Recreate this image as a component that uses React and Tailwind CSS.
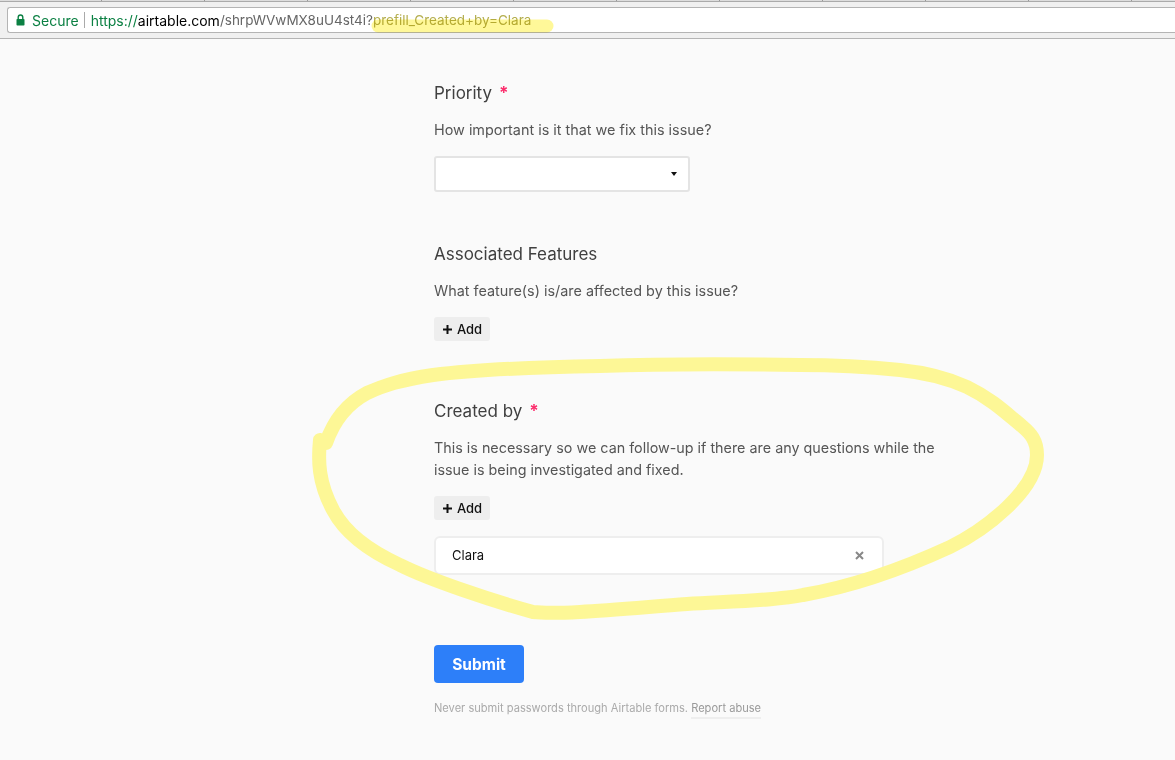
import React from "react";

const FONT = "font-['Inter',sans-serif]";
const TAB_COUNT = 12;

const Label = ({ children, required }) => (
  <h2 className="h-[24px] text-[17px] leading-[24px] text-[#404040] flex">
    {children}
    {required && <span className="ml-[7px] text-[#fc2d6c] font-bold">*</span>}
  </h2>
);

const AddButton = () => (
  <button className="w-[56px] h-[24px] pt-px pl-[1px] rounded-[3px] bg-[#eeeeee] flex items-center justify-center gap-[5px] text-[13px] font-medium text-[#111111]">
    <svg width="9" height="9" viewBox="0 0 9 9">
      <path d="M4.5 0v9M0 4.5h9" stroke="#111" strokeWidth="2" />
    </svg>
    Add
  </button>
);

const Highlight = () => (
  <>
    <svg className="absolute inset-0 pointer-events-none" width="1175" height="760" viewBox="0 0 1175 760" fill="none">
      <path
        d="M320 440C318 460 318 482 333 510C345 533 367 550 400 565C430 580 490 600 533 612C560 615 620 609 687 604C740 601 780 600 803 595C850 587 900 570 950 547C985 530 1037 490 1037 455C1037 440 1030 433 1023 427C1005 412 990 398 967 387C945 377 920 372 900 370C860 366 830 365 800 365C730 364 660 364 600 366C540 367 480 369 433 375C400 380 385 385 367 393C350 402 335 417 326 443"
        stroke="#fdf796"
        strokeWidth="14"
        strokeLinecap="round"
      />
    </svg>
    <svg className="absolute inset-0 pointer-events-none mix-blend-multiply" width="1175" height="40" viewBox="0 0 1175 40" fill="none">
      <path d="M378 26H547" stroke="#fff899" strokeWidth="13" strokeLinecap="round" />
    </svg>
  </>
);

const AddressBar = () => (
  <div className="h-[39px] shrink-0 border-b border-[#b4b4b4] bg-[#f0f0f0] flex flex-col">
    <div className="h-[2px] border-b border-[#aaaaaa] bg-[#dddddd] flex">
      {Array(TAB_COUNT)
        .fill(null)
        .map((_, i) => (
          <div key={i} className={`h-[1px] border-r border-[#999999] shrink-0 ${i === 0 ? "w-[102px]" : "w-[103px]"}`} />
        ))}
    </div>
    <div className="mt-[5px] ml-[7px] h-[26px] bg-white rounded-l-[3px] border border-r-0 border-[#b4b4b4] flex items-center pl-[8px] text-[14px] text-[#666666]">
      <svg width="9" height="12" viewBox="0 0 9 12" className="mr-[7px]">
        <path d="M2.2 5V3.3a2.3 2.3 0 0 1 4.6 0V5" stroke="#0b8043" strokeWidth="1.4" fill="none" />
        <rect x="0.5" y="5" width="8" height="6.5" rx="0.8" fill="#0b8043" />
      </svg>
      <span className="text-[#0b8043]">Secure</span>
      <span className="w-px h-[16px] bg-[#aaaaaa] ml-[5px] mr-[6px]" />
      <span className="text-[#0b8043]">https://</span>
      <span className="text-black">airtable.com</span>
      <span className="text-[13.5px]">/shrpWVwMX8uU4st4i?</span>
      <span className="text-[13.5px] text-[#b5af4f]">prefill_Created+by=Clara</span>
    </div>
  </div>
);

export default function App() {
  return (
    <div className={`relative w-[1175px] h-[760px] overflow-hidden bg-[#fafafa] flex flex-col ${FONT}`}>
      <AddressBar />
      <main className="ml-[434px] w-[510px] pt-[42px]">
        <section className="h-[161px]">
          <Label required>Priority</Label>
          <p className="mt-[14px] text-[14.4px] leading-[22px] text-[#555555]">How important is it that we fix this issue?</p>
          <div className="mt-[15px] w-[256px] h-[36px] rounded-[3px] border-2 border-[#e4e4e4] bg-white flex items-center justify-end pr-[11px]">
            <span className="w-0 h-0 border-x-[3px] border-x-transparent border-t-[4px] border-t-[#111111]" />
          </div>
        </section>
        <section className="h-[157px]">
          <Label>Associated Features</Label>
          <p className="mt-[14px] text-[14.4px] leading-[22px] text-[#555555]">What feature(s) is/are affected by this issue?</p>
          <div className="mt-[15px]"><AddButton /></div>
        </section>
        <section>
          <Label required>Created by</Label>
          <p className="mt-[14px] text-[14.35px] leading-[22px] text-[#555555]">
            This is necessary so we can follow-up if there are any questions while the issue is being investigated and fixed.
          </p>
          <div className="mt-[15px]"><AddButton /></div>
          <div className="mt-[16px] w-[450px] h-[39px] rounded-[6px] border-2 border-[#eeeeee] bg-white flex items-center justify-between pl-[16px] pr-[18px] text-[13px] text-[#111111]">
            Clara
            <svg width="9" height="9" viewBox="0 0 9 9">
              <path d="M1 1l7 7M8 1l-7 7" stroke="#888888" strokeWidth="2" />
            </svg>
          </div>
          <button className="block mt-[70px] w-[90px] h-[38px] pt-px rounded-[4px] bg-[#2d7ff9] text-white text-[15.5px] font-bold">Submit</button>
          <p className="mt-[17px] text-[11.1px] leading-[16px] text-[#aaaaaa]">
            Never submit passwords through Airtable forms. <span className="text-[#999999] border-b-2 border-[#eeeeee] pb-[2px]">Report abuse</span>
          </p>
        </section>
      </main>
      <Highlight />
    </div>
  );
}
